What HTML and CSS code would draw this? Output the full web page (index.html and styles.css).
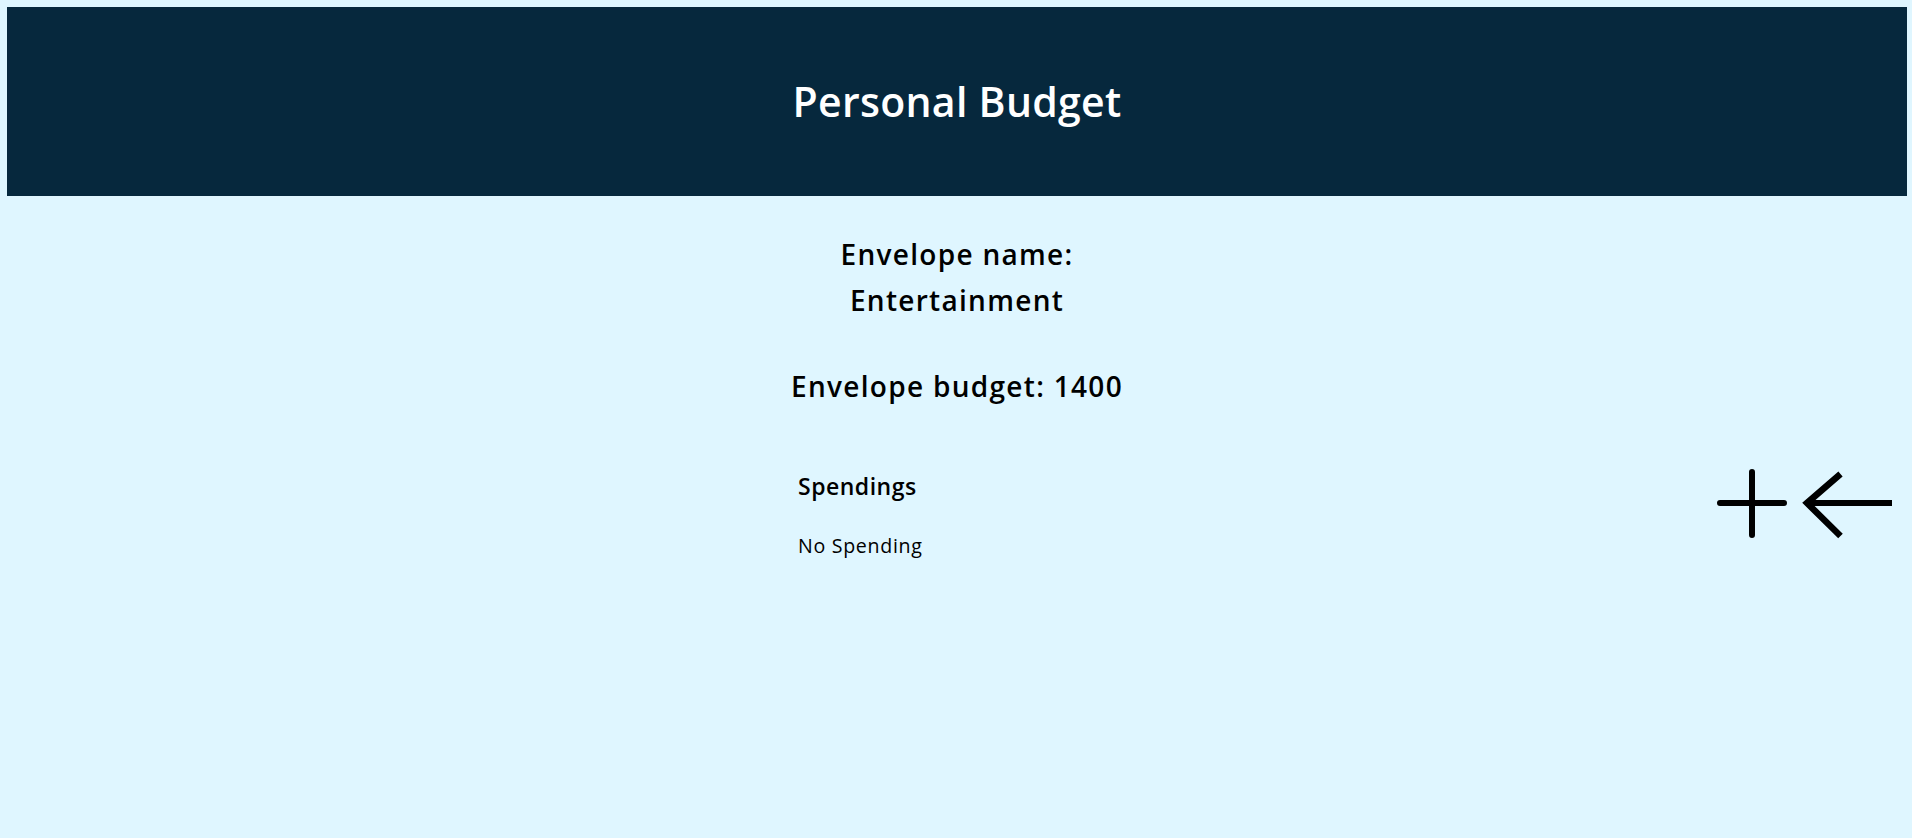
FILE: index.html
```html
<!DOCTYPE html>
<html lang="en">
<head>
<meta charset="utf-8">
<title>Personal Budget</title>
<link rel="stylesheet" href="styles.css">
</head>
<body>
<header class="site-header">
  <h1 class="site-title">Personal Budget</h1>
</header>
<main class="envelope">
  <h2 class="envelope-name">Envelope name:<br>Entertainment</h2>
  <h2 class="envelope-budget">Envelope budget: 1400</h2>
  <section class="envelope-row">
    <div class="spendings">
      <h3 class="spendings-title">Spendings</h3>
      <p class="spendings-empty">No Spending</p>
    </div>
    <div class="actions">
      <button class="icon-btn" aria-label="Add spending">
        <svg class="icon-plus" width="76" height="76" viewBox="0 0 76 76">
          <path d="M6 38H70M38 7V70" fill="none" stroke="#000" stroke-width="6" stroke-linecap="round"/>
        </svg>
      </button>
      <button class="icon-btn" aria-label="Back">
        <svg class="icon-back" width="94" height="72" viewBox="0 0 94 72">
          <path d="M7 33H92" fill="none" stroke="#000" stroke-width="6"/>
          <path d="M40.5 4L7 33L40.5 66" fill="none" stroke="#000" stroke-width="6.5" stroke-linejoin="miter"/>
        </svg>
      </button>
    </div>
  </section>
</main>
</body>
</html>
```
FILE: styles.css
```css
html {
  background: #DFF6FF;
}

body {
  margin: 0;
  padding: 7px 5px 0 7px;
  min-height: 100vh;
  box-sizing: border-box;
  background: #DFF6FF;
  font-family: "Open Sans", "Liberation Sans", sans-serif;
  color: #000;
}

.site-header {
  height: 189px;
  background: #06283D;
  display: flex;
  align-items: center;
  justify-content: center;
}

.site-title {
  margin: 0;
  color: #fff;
  font-size: 41px;
  font-weight: 600;
  line-height: 1.2;
  letter-spacing: 0.3px;
}

.envelope {
  display: flex;
  flex-direction: column;
  align-items: center;
}

.envelope-name,
.envelope-budget {
  margin: 0;
  font-size: 28px;
  font-weight: 600;
  line-height: 46px;
  letter-spacing: 1.3px;
  text-align: center;
}

.envelope-name {
  margin-top: 35px;
}

.envelope-budget {
  margin-top: 40px;
}

.envelope-row {
  align-self: stretch;
  display: flex;
  align-items: flex-start;
  margin-top: 56px;
}

.spendings {
  margin-left: 791px;
  padding-top: 5px;
}

.spendings-title {
  margin: 0;
  font-size: 23px;
  font-weight: 600;
  line-height: 32px;
  letter-spacing: 0.5px;
}

.spendings-empty {
  margin: 30px 0 0;
  font-size: 19.6px;
  font-weight: 400;
  line-height: 28px;
  letter-spacing: 0.7px;
}

.actions {
  margin-left: auto;
  margin-right: 13px;
  display: flex;
  align-items: flex-start;
  gap: 10px;
}

.icon-btn {
  padding: 0;
  border: 0;
  background: none;
  cursor: pointer;
  display: block;
}

.icon-btn svg {
  display: block;
}

.icon-back {
  margin-top: 5px;
}
```
